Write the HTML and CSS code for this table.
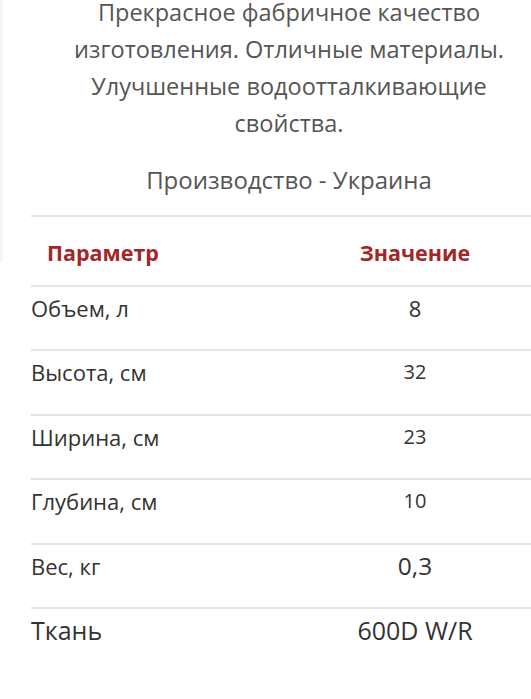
FILE: index.html
```html
<!DOCTYPE html>
<html lang="ru">
<head>
<meta charset="utf-8">
<link rel="stylesheet" href="styles.css">
</head>
<body>
<div class="edge"></div>
<main class="content">
  <p class="desc">Прекрасное фабричное качество изготовления. Отличные материалы. Улучшенные водоотталкивающие свойства.</p>
  <p class="origin">Производство - Украина</p>
  <div class="specs">
    <div class="row head">
      <div class="cell name">Параметр</div>
      <div class="cell val">Значение</div>
    </div>
    <div class="row">
      <div class="cell name">Объем, л</div>
      <div class="cell val big">8</div>
    </div>
    <div class="row">
      <div class="cell name">Высота, см</div>
      <div class="cell val">32</div>
    </div>
    <div class="row">
      <div class="cell name">Ширина, см</div>
      <div class="cell val">23</div>
    </div>
    <div class="row">
      <div class="cell name">Глубина, см</div>
      <div class="cell val">10</div>
    </div>
    <div class="row">
      <div class="cell name">Вес, кг</div>
      <div class="cell val bigger">0,3</div>
    </div>
    <div class="row large">
      <div class="cell name">Ткань</div>
      <div class="cell val">600D W/R</div>
    </div>
  </div>
</main>
</body>
</html>
```
FILE: styles.css
```css
html, body {
  margin: 0;
  padding: 0;
  background: #ffffff;
  overflow: hidden;
}
body {
  font-family: "Open Sans", "Noto Sans", sans-serif;
  color: #333333;
  position: relative;
  height: 699px;
}
.edge {
  position: absolute;
  left: 0;
  top: 0;
  width: 3px;
  height: 262px;
  background: #f6f6f6;
}
.content {
  width: 516px;
  margin-left: 31px;
}
.desc {
  margin: -6px 0 0;
  font-size: 23.5px;
  line-height: 37px;
  text-align: center;
  color: #555555;
  padding: 0 6px;
}
.origin {
  margin: 19px 0 0;
  font-size: 24px;
  line-height: 37px;
  text-align: center;
  color: #555555;
}
.specs {
  margin-top: 17px;
}
.row {
  display: grid;
  grid-template-columns: 252px 264px;
  border-top: 2px solid #e4e4e4;
  height: 64.4px;
  box-sizing: border-box;
  padding-top: 7px;
}
.cell {
  font-size: 20px;
  line-height: 28px;
  color: #333333;
}
.name {
  font-size: 22px;
}
.val {
  text-align: center;
}
.head {
  height: 70px;
  padding-top: 22px;
}
.head .cell {
  font-size: 21.5px;
  font-weight: 700;
  color: #a3262b;
}
.head .name {
  padding-left: 16px;
}
.big {
  font-size: 22px;
}
.bigger {
  font-size: 24.5px;
}
.large {
  padding-top: 6px;
}
.large .cell {
  font-size: 25px;
  line-height: 30px;
}
```
